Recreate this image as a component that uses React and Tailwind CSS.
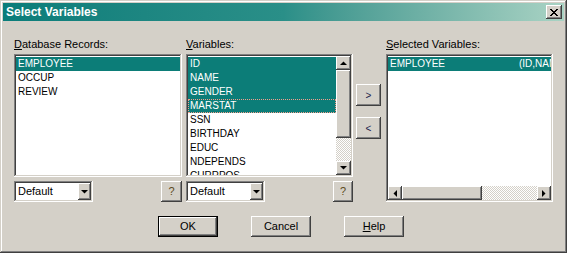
import React from "react";

//? 3D borders, classic style
const raised =
  "shadow-[inset_-1px_-1px_#404040,inset_1px_1px_#ffffff,inset_-2px_-2px_#808080,inset_2px_2px_#d4d0c8]";
const sunken =
  "shadow-[inset_-1px_-1px_#ffffff,inset_1px_1px_#808080,inset_-2px_-2px_#d4d0c8,inset_2px_2px_#404040]";
const dither =
  "bg-[repeating-conic-gradient(#ffffff_0_25%,#d4d0c8_0_50%)] bg-[length:2px_2px]";

const Tri = ({ dir }) => {
  const pts = {
    up: "0,4 7,4 3.5,0.5",
    down: "0,0 7,0 3.5,3.5",
    left: "4,0 4,7 0.5,3.5",
    right: "0,0 0,7 3.5,3.5",
  }[dir];
  const w = dir === "up" || dir === "down" ? 7 : 4;
  const h = dir === "up" || dir === "down" ? 4 : 7;
  return (
    <svg width={w} height={h} viewBox={`0 0 ${w} ${h}`}>
      <polygon points={pts} fill="#000" />
    </svg>
  );
};

const ListRow = ({ text, sel, focus }) => (
  <div
    className={`h-[14px] leading-[14px] pl-[2px] text-[10px] whitespace-nowrap ${
      sel ? "bg-[#0c7d78] text-white" : "text-black"
    } ${focus ? "outline-1 outline-dotted -outline-offset-1 outline-[#f2a08c]" : ""}`}
  >
    {text}
  </div>
);

const Combo = () => (
  <div className={`w-[79px] h-[21px] bg-white p-[2px] flex ${sunken}`}>
    <span className="flex-1 pl-[2px] text-[11px] leading-[17px] text-black">Default</span>
    <div className={`w-[13px] h-full bg-[#d4d0c8] flex items-center justify-center ${raised}`}>
      <Tri dir="down" />
    </div>
  </div>
);

const HelpBtn = ({ w }) => (
  <div
    className={`${w} h-[21px] bg-[#d4d0c8] flex items-center justify-center text-[11px] text-[#5c4a1c] ${raised}`}
  >
    ?
  </div>
);

const Label = ({ u, rest }) => (
  <p className="h-[13px] leading-[13px] text-[11px] text-black mb-[3px] whitespace-nowrap">
    <u>{u}</u>
    {rest}
  </p>
);

const PushBtn = ({ children, def }) => (
  <div
    className={`w-[60px] h-[21px] bg-[#d4d0c8] flex items-center justify-center text-[11px] text-black ${
      def
        ? "shadow-[inset_0_0_0_1px_#000000,inset_-2px_-2px_#404040,inset_2px_2px_#ffffff,inset_-3px_-3px_#808080]"
        : raised
    }`}
  >
    {children}
  </div>
);

const App = () => {
  const vars = [
    ["ID", true],
    ["NAME", true],
    ["GENDER", true],
    ["MARSTAT", true, true],
    ["SSN"],
    ["BIRTHDAY"],
    ["EDUC"],
    ["NDEPENDS"],
    ["CURRPOS"],
  ];

  return (
    <div
      className="w-[567px] h-[253px] bg-[#d4d0c8] p-[3px] flex flex-col font-['Liberation_Sans',Arial,sans-serif] shadow-[inset_-1px_-1px_#404040,inset_1px_1px_#d4d0c8,inset_-2px_-2px_#808080,inset_2px_2px_#ffffff]"
    >
      {/* title bar */}
      <div className="h-[18px] bg-linear-to-r from-[#0a7d7a] via-[#2a8f88] to-[#a9d3c4] flex items-center justify-between pl-[3px] pr-[2px]">
        <span className="text-white font-bold text-[12px] leading-[18px]">Select Variables</span>
        <div className={`w-[16px] h-[14px] bg-[#d4d0c8] flex items-center justify-center ${raised}`}>
          <svg width="8" height="7" viewBox="0 0 8 7" shapeRendering="crispEdges">
            <path d="M0 0h2v1h-2zM6 0h2v1h-2zM1 1h2v1h-2zM5 1h2v1h-2zM2 2h4v1h-4zM3 3h2v1h-2zM2 4h4v1h-4zM1 5h2v1h-2zM5 5h2v1h-2zM0 6h2v1h-2zM6 6h2v1h-2z" fill="#000" />
          </svg>
        </div>
      </div>

      {/* body */}
      <div className="flex-1 pt-[17px] pl-[11px]">
        <div className="flex items-start">
          {/* database records */}
          <div className="w-[168px] flex flex-col">
            <Label u="D" rest="atabase Records:" />
            <div className={`h-[123px] bg-white p-[2px] ${sunken}`}>
              <div className="pt-[1px]">
                <ListRow text="EMPLOYEE" sel />
                <ListRow text="OCCUP" />
                <ListRow text="REVIEW" />
              </div>
            </div>
            <div className="mt-[4px] flex justify-between">
              <Combo />
              <HelpBtn w="w-[21px]" />
            </div>
          </div>

          {/* variables */}
          <div className="ml-[4px] w-[167px] flex flex-col">
            <Label u="V" rest="ariables:" />
            <div className={`h-[123px] bg-white p-[2px] flex ${sunken}`}>
              <div className="flex-1 pt-[1px] overflow-hidden">
                {vars.map(([t, s, f]) => (
                  <ListRow key={t} text={t} sel={s} focus={f} />
                ))}
              </div>
              <div className="w-[15px] flex flex-col">
                <div className={`h-[14px] bg-[#d4d0c8] flex items-center justify-center ${raised}`}>
                  <Tri dir="up" />
                </div>
                <div className={`h-[68px] bg-[#d4d0c8] ${raised}`} />
                <div className={`flex-1 ${dither}`} />
                <div className={`h-[14px] bg-[#d4d0c8] flex items-center justify-center ${raised}`}>
                  <Tri dir="down" />
                </div>
              </div>
            </div>
            <div className="mt-[4px] flex justify-between">
              <Combo />
              <HelpBtn w="w-[20px]" />
            </div>
          </div>

          {/* move buttons */}
          <div className="ml-[3px] w-[25px] pt-[46px] flex flex-col">
            <div className={`h-[22px] bg-[#d4d0c8] flex items-center justify-center text-[10px] text-[#1c1c4c] ${raised}`}>
              &gt;
            </div>
            <div className={`mt-[11px] h-[22px] bg-[#d4d0c8] flex items-center justify-center text-[10px] text-[#1c1c4c] ${raised}`}>
              &lt;
            </div>
          </div>

          {/* selected variables */}
          <div className="ml-[5px] w-[167px] flex flex-col">
            <Label u="S" rest="elected Variables:" />
            <div className={`h-[148px] bg-white p-[2px] flex flex-col ${sunken}`}>
              <div className="flex-1 pt-[1px] overflow-hidden">
                <div className="h-[14px] leading-[14px] text-[10px] text-white bg-[#0c7d78] flex whitespace-nowrap overflow-hidden">
                  <span className="w-[131px] shrink-0 pl-[2px]">EMPLOYEE</span>
                  <span>(ID,NAME,GENDER,MARSTAT)</span>
                </div>
              </div>
              <div className="h-[14px] flex">
                <div className={`w-[14px] bg-[#d4d0c8] flex items-center justify-center ${raised}`}>
                  <Tri dir="left" />
                </div>
                <div className={`w-[80px] bg-[#d4d0c8] ${raised}`} />
                <div className={`flex-1 ${dither}`} />
                <div className={`w-[14px] bg-[#d4d0c8] flex items-center justify-center ${raised}`}>
                  <Tri dir="right" />
                </div>
              </div>
            </div>
          </div>
        </div>

        {/* dialog buttons */}
        <div className="mt-[14px] pl-[144px] flex gap-[33px]">
          <PushBtn def>OK</PushBtn>
          <PushBtn>Cancel</PushBtn>
          <PushBtn>
            <span>
              <u>H</u>elp
            </span>
          </PushBtn>
        </div>
      </div>
    </div>
  );
};

export default App;
